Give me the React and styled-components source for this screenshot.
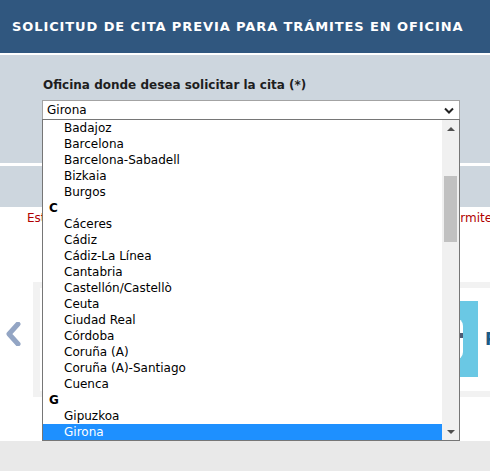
import React from "react";
import styled, { createGlobalStyle } from "styled-components";

const Global = createGlobalStyle`
  html, body { margin: 0; padding: 0; overflow: hidden; background: #fff; }
  body { font-family: "DejaVu Sans", Verdana, sans-serif; font-size: 12px; }
`;

const Page = styled.div`
  width: 490px;
  overflow: hidden;
  display: flex;
  flex-direction: column;
`;

const Header = styled.header`
  height: 53px;
  background: #30577f;
  border-bottom: 2px solid #fff;
  display: flex;
  align-items: center;
  padding-left: 12px;
`;

const Title = styled.h1`
  margin: 0;
  font-family: "DejaVu Sans", Verdana, sans-serif;
  font-weight: bold;
  font-size: 13px;
  letter-spacing: 0.9px;
  color: #fff;
  white-space: nowrap;
`;

const FormPanel = styled.section`
  background: #cdd6de;
  height: 111px;
  box-sizing: border-box;
  padding: 22px 0 0 42px;
  border-bottom: 3px solid #fff;
`;

const Label = styled.label`
  display: block;
  font-weight: bold;
  font-size: 12px;
  line-height: 16px;
  color: #1e1e1e;
  padding-left: 1px;
  margin-bottom: 7px;
`;

const SelectWrap = styled.div`
  position: relative;
  width: 418px;
  z-index: 5;
`;

const SelectBox = styled.div`
  box-sizing: border-box;
  height: 20px;
  border: 1px solid #a3a3a3;
  background: #fff;
  display: flex;
  align-items: center;
  justify-content: space-between;
  padding: 0 5px 0 4px;
  font-size: 12px;
  color: #000;
`;

const Listbox = styled.div`
  position: absolute;
  top: 19px;
  left: 0;
  width: 418px;
  height: 322px;
  box-sizing: border-box;
  border: 1px solid #767676;
  background: #fff;
  display: flex;
`;

const Options = styled.ul`
  list-style: none;
  margin: 0;
  padding: 0;
  flex: 1;
`;

const Row = styled.li`
  height: 16px;
  line-height: 16px;
  font-size: 12px;
  white-space: nowrap;
  padding-left: ${(p) => (p.$group ? "6px" : "21px")};
  font-weight: ${(p) => (p.$group ? "bold" : "normal")};
  background: ${(p) => (p.$selected ? "#1e90ff" : "transparent")};
  color: ${(p) => (p.$selected ? "#fff" : "#000")};
`;

const Scrollbar = styled.div`
  width: 17px;
  background: #f0f0f0;
  display: flex;
  flex-direction: column;
  align-items: center;
`;

const ScrollBtn = styled.div`
  height: 16px;
  width: 17px;
  display: flex;
  align-items: center;
  justify-content: center;
`;

const Thumb = styled.div`
  width: 13px;
  height: 66px;
  margin-top: 40px;
  background: #c1c1c1;
`;

const ScrollSpace = styled.div`
  flex: 1;
`;

const Band = styled.div`
  height: 41px;
  background: #cdd6de;
`;

const Notice = styled.p`
  margin: 0;
  padding: 3px 0 0 27px;
  height: 16px;
  line-height: 16px;
  font-size: 12px;
  color: #b00000;
  white-space: nowrap;
  overflow: hidden;
`;

const Carousel = styled.div`
  margin-top: 56px;
  height: 115px;
  display: flex;
  align-items: center;
`;

const ArrowBtn = styled.div`
  width: 33px;
  flex: none;
  display: flex;
  padding-left: 5px;
  box-sizing: border-box;
  margin-top: -12px;
`;

const Slides = styled.div`
  flex: none;
  width: 600px;
  height: 115px;
  box-sizing: border-box;
  border: 6px solid #f2f2f2;
  border-left-width: 7px;
  background: #fff;
  display: flex;
  align-items: flex-start;
  padding: 13px 0 0 378px;
`;

const Card = styled.div`
  display: flex;
  align-items: center;
  gap: 7px;
`;

const Tile = styled.div`
  width: 60px;
  height: 76px;
  background: #6ac8e4;
  display: flex;
  align-items: center;
  padding-left: 13px;
  box-sizing: border-box;
`;

const CardTitle = styled.span`
  font-size: 17px;
  font-weight: bold;
  color: #1d5a85;
  white-space: nowrap;
`;

const Footer = styled.footer`
  margin-top: 44px;
  height: 40px;
  background: #e9e9e9;
`;

const items = [
  { t: "Badajoz" },
  { t: "Barcelona" },
  { t: "Barcelona-Sabadell" },
  { t: "Bizkaia" },
  { t: "Burgos" },
  { t: "C", g: true },
  { t: "Cáceres" },
  { t: "Cádiz" },
  { t: "Cádiz-La Línea" },
  { t: "Cantabria" },
  { t: "Castellón/Castellò" },
  { t: "Ceuta" },
  { t: "Ciudad Real" },
  { t: "Córdoba" },
  { t: "Coruña (A)" },
  { t: "Coruña (A)-Santiago" },
  { t: "Cuenca" },
  { t: "G", g: true },
  { t: "Gipuzkoa" },
  { t: "Girona", s: true },
];

export default function App() {
  return (
    <>
      <Global />
      <Page>
        <Header>
          <Title>SOLICITUD DE CITA PREVIA PARA TRÁMITES EN OFICINA</Title>
        </Header>
        <FormPanel>
          <Label>Oficina donde desea solicitar la cita (*)</Label>
          <SelectWrap>
            <SelectBox>
              <span>Girona</span>
              <svg width="10" height="7" viewBox="0 0 10 7">
                <polyline points="1,1.5 5,5.5 9,1.5" fill="none" stroke="#222" strokeWidth="2" />
              </svg>
            </SelectBox>
            <Listbox>
              <Options>
                {items.map((it) => (
                  <Row key={it.t} $group={it.g} $selected={it.s}>
                    {it.t}
                  </Row>
                ))}
              </Options>
              <Scrollbar>
                <ScrollBtn>
                  <svg width="8" height="5" viewBox="0 0 8 5">
                    <polygon points="0,5 4,1 8,5" fill="#505050" />
                  </svg>
                </ScrollBtn>
                <Thumb />
                <ScrollSpace />
                <ScrollBtn>
                  <svg width="8" height="5" viewBox="0 0 8 5">
                    <polygon points="0,0 4,4 8,0" fill="#505050" />
                  </svg>
                </ScrollBtn>
              </Scrollbar>
            </Listbox>
          </SelectWrap>
        </FormPanel>
        <Band />
        <Notice>
          Este servicio le permite solicitar cita previa para realizar trámites; se permite la modificación y anulación de citas.
        </Notice>
        <Carousel>
          <ArrowBtn>
            <svg width="16" height="24" viewBox="0 0 16 24">
              <polyline points="13,2 4,12 13,22" fill="none" stroke="#93a5c4" strokeWidth="5" strokeLinejoin="round" strokeLinecap="round" />
            </svg>
          </ArrowBtn>
          <Slides>
            <Card>
              <Tile>
                <svg width="32" height="42" viewBox="0 0 32 42">
                  <rect x="0" y="0" width="32" height="42" rx="8" fill="#fff" />
                  <rect x="0" y="15" width="32" height="5" fill="#4f5b73" />
                </svg>
              </Tile>
              <CardTitle>Prestaciones</CardTitle>
            </Card>
          </Slides>
        </Carousel>
        <Footer />
      </Page>
    </>
  );
}
